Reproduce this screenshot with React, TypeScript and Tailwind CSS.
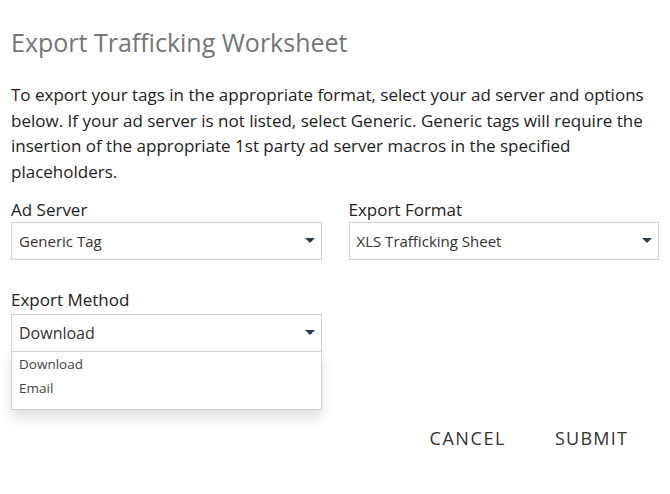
import React from "react";

const Arrow = () => (
  <svg width="10" height="5" viewBox="0 0 10 5" className="shrink-0">
    <path d="M0 0 L10 0 L5 5 Z" fill="#2c3e50" />
  </svg>
);

const Select = ({ value, size = "text-[15px]" }: { value: string; size?: string }) => (
  <div className="h-[38px] border border-[#cfcfcf] bg-white flex items-center justify-between pl-[7px] pr-[6px]">
    <span className={`${size} text-[#333]`}>{value}</span>
    <Arrow />
  </div>
);

export default function App() {
  return (
    <div
      className="w-[670px] h-[494px] bg-white px-[11px] overflow-hidden"
      style={{ fontFamily: '"Open Sans", sans-serif' }}
    >
      <h1 className="text-[25px] leading-[30px] text-[#757575] font-normal pt-[27px]">
        Export Trafficking Worksheet
      </h1>
      <p className="mt-[25px] text-[17px] leading-[25.7px] text-[#222]">
        To export your tags in the appropriate format, select your ad server and options below. If your ad server is not listed, select Generic. Generic tags will require the insertion of the appropriate 1st party ad server macros in the specified placeholders.
      </p>
      <div className="grid grid-cols-2 gap-x-[27px] mt-[13px]">
        <div>
          <div className="text-[17px] leading-[24px] text-[#222]">Ad Server</div>
          <Select value="Generic Tag" />
        </div>
        <div>
          <div className="text-[17px] leading-[24px] text-[#222]">Export Format</div>
          <Select value="XLS Trafficking Sheet" />
        </div>
      </div>
      <div className="grid grid-cols-2 gap-x-[27px] mt-[28px]">
        <div className="relative">
          <div className="text-[17px] leading-[24px] text-[#222] mb-[2px]">Export Method</div>
          <Select value="Download" size="text-[16px]" />
          <div className="absolute left-0 right-0 top-[63px] border border-[#cfcfcf] bg-white shadow-[0_8px_12px_rgba(0,0,0,0.12)] pt-0 pb-[9px] z-10">
            <div className="pl-[7px] text-[13.5px] leading-[24px] text-[#444]">Download</div>
            <div className="pl-[7px] text-[13.5px] leading-[24px] text-[#444]">Email</div>
          </div>
        </div>
        <div />
      </div>
      <div className="flex justify-end gap-[49px] pr-[31px] mt-[74px]">
        <button className="text-[18px] leading-[24px] tracking-[1.6px] text-[#333]">CANCEL</button>
        <button className="text-[18px] leading-[24px] tracking-[1.2px] text-[#333]">SUBMIT</button>
      </div>
    </div>
  );
}
